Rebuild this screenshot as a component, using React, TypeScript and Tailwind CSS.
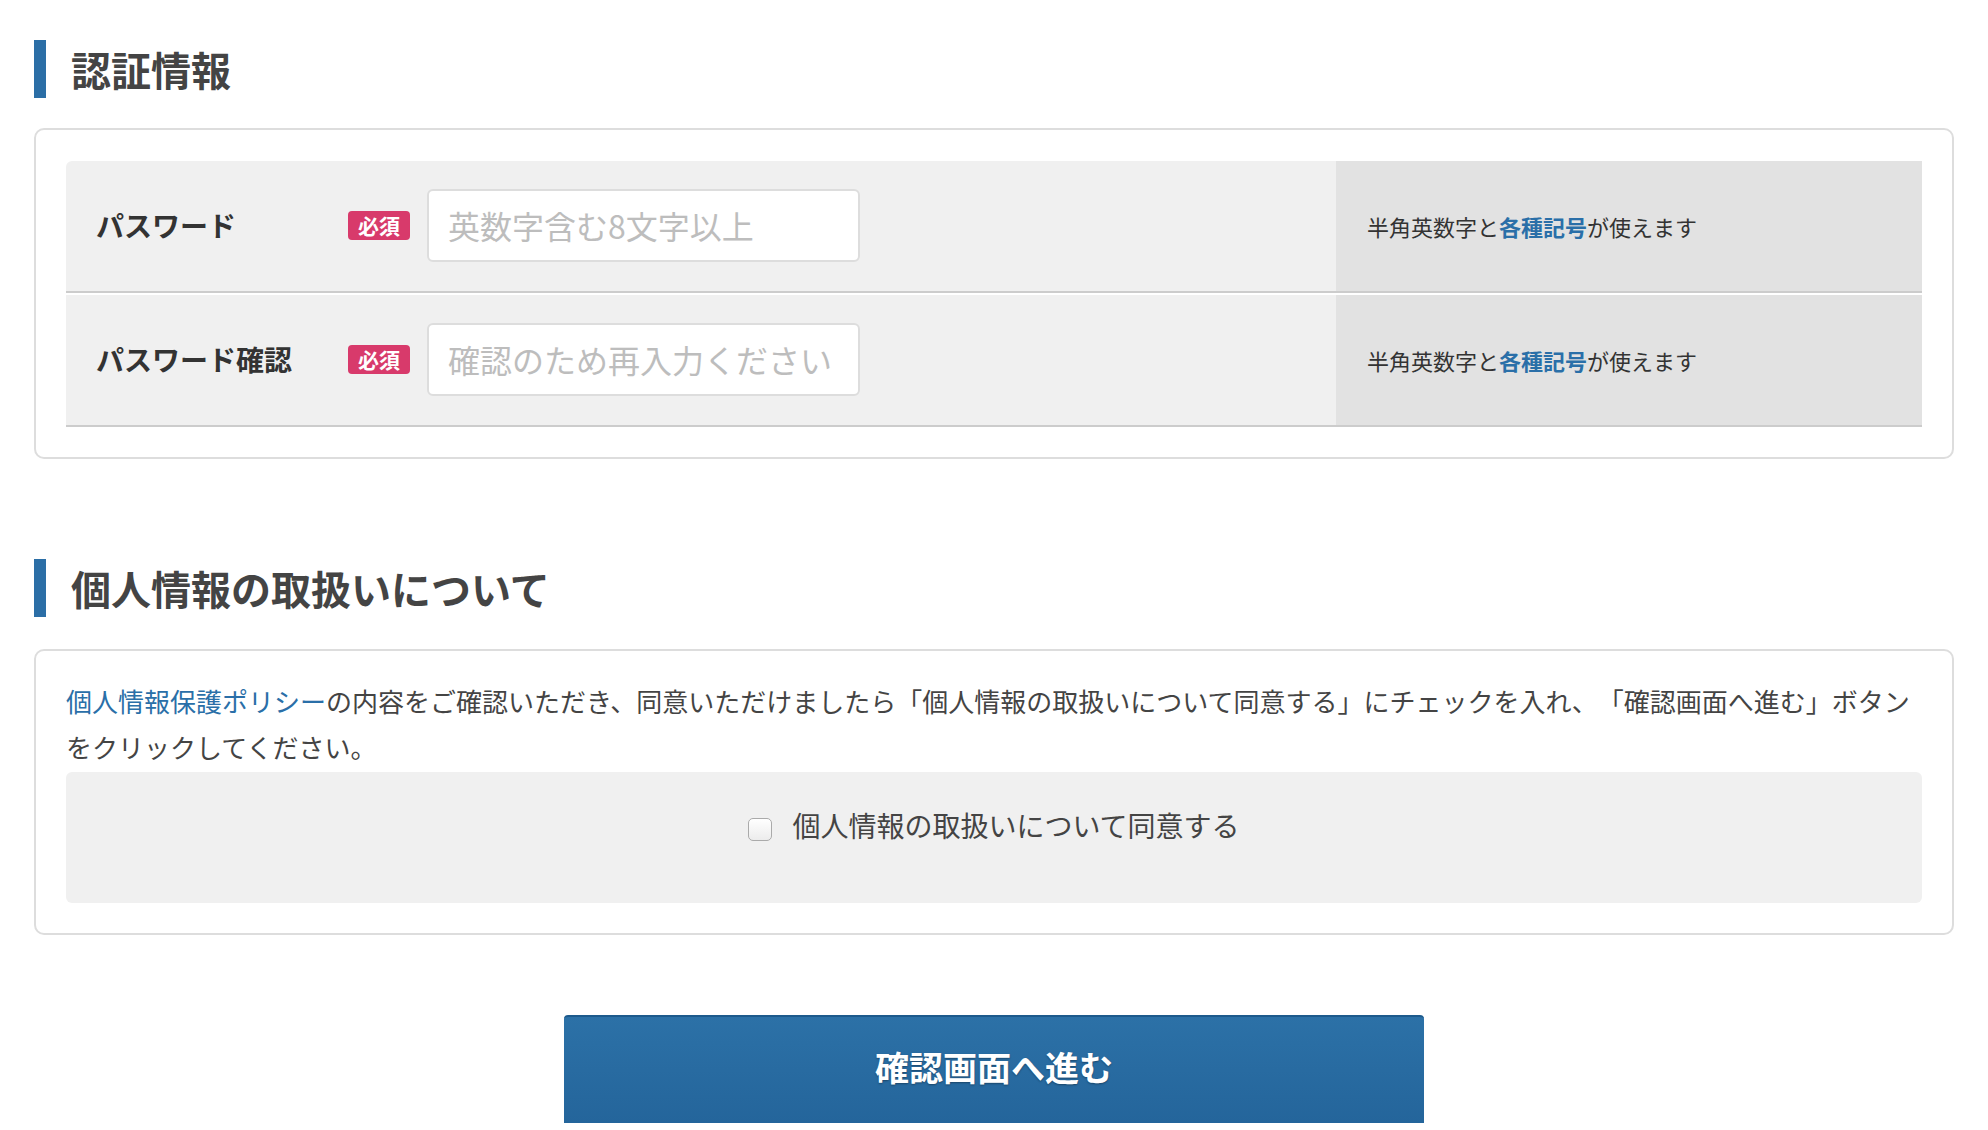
import { useState } from 'react'

const font = "font-['Noto_Sans_CJK_JP','Noto_Sans',sans-serif]"

function SectionTitle({ children }: { children: React.ReactNode }) {
  return (
    <h2 className="flex h-[58px] items-center border-l-[12px] border-[#2b6ea6] pl-[25px] text-[40px] font-bold leading-none text-[#444]">
      {children}
    </h2>
  )
}

function Required() {
  return (
    <span className="flex h-[29px] w-[62px] shrink-0 items-center justify-center rounded-[4px] bg-[#d83a6b] text-[21px] font-bold leading-none text-white">
      必須
    </span>
  )
}

function PasswordRow({ label, placeholder, first }: { label: string; placeholder: string; first?: boolean }) {
  return (
    <div className={`flex h-[132px] border-b-2 border-[#cccccc] bg-[#f0f0f0] ${first ? 'rounded-t-[6px]' : 'mt-[2px]'}`}>
      <div className="flex flex-1 items-center pb-[2px]">
        <div className="w-[282px] shrink-0 pl-[30px] text-[28px] font-bold text-[#333]">{label}</div>
        <Required />
        <input
          type="password"
          placeholder={placeholder}
          className="ml-[17px] h-[73px] w-[433px] rounded-[6px] border-2 border-[#dddddd] bg-white px-[19px] text-[32px] text-[#333] outline-none placeholder:text-[#bdbdbd]"
        />
      </div>
      <div className="flex w-[586px] items-center bg-[#e2e2e2] pl-[31px] text-[22px] text-[#333]">
        <span>
          半角英数字と<b className="font-bold text-[#2a6fa8]">各種記号</b>が使えます
        </span>
      </div>
    </div>
  )
}

export default function App() {
  const [agree, setAgree] = useState(false)

  return (
    <div className={`${font} min-h-[1130px] bg-white px-[34px] pt-[40px] pb-[20px]`}>
      <SectionTitle>認証情報</SectionTitle>

      <div className="mt-[30px] rounded-[10px] border-2 border-[#dddddd] px-[30px] pt-[31px] pb-[30px]">
        <PasswordRow first label="パスワード" placeholder="英数字含む8文字以上" />
        <PasswordRow label="パスワード確認" placeholder="確認のため再入力ください" />
      </div>

      <div className="mt-[100px]">
        <SectionTitle>個人情報の取扱いについて</SectionTitle>
      </div>

      <div className="mt-[32px] rounded-[10px] border-2 border-[#dddddd] px-[30px] pt-[27px] pb-[30px]">
        <p className="mb-[2px] text-[26px] leading-[46px] text-[#444] [text-spacing-trim:space-all]">
          <a href="#" className="text-[#2a6fa8]">個人情報保護ポリシー</a>
          の内容をご確認いただき、同意いただけましたら「個人情報の取扱いについて同意する」にチェックを入れ、「確認画面へ進む」ボタンをクリックしてください。
        </p>
        <div className="flex h-[131px] justify-center rounded-[6px] bg-[#f0f0f0] pt-[34px]">
          <label className="flex h-[38px] cursor-pointer items-center gap-[20px] text-[28px] leading-[38px] text-[#444]">
            <input
              type="checkbox"
              checked={agree}
              onChange={(e) => setAgree(e.target.checked)}
              className="mt-[8px] h-[23px] w-[24px] appearance-none rounded-[5px] border border-[#aaaaaa] bg-gradient-to-b from-white to-[#ececec] checked:bg-[#2b6ea6]"
            />
            個人情報の取扱いについて同意する
          </label>
        </div>
      </div>

      <div className="mt-[80px] flex justify-center">
        <button className="h-[108px] w-[860px] rounded-t-[4px] border-t-2 border-[#1d5a8c] bg-gradient-to-b from-[#2c71a7] to-[#24659b] pb-[8px] text-[34px] font-bold text-white [text-shadow:0_1px_2px_rgba(0,0,0,0.35)]">
          確認画面へ進む
        </button>
      </div>
    </div>
  )
}
